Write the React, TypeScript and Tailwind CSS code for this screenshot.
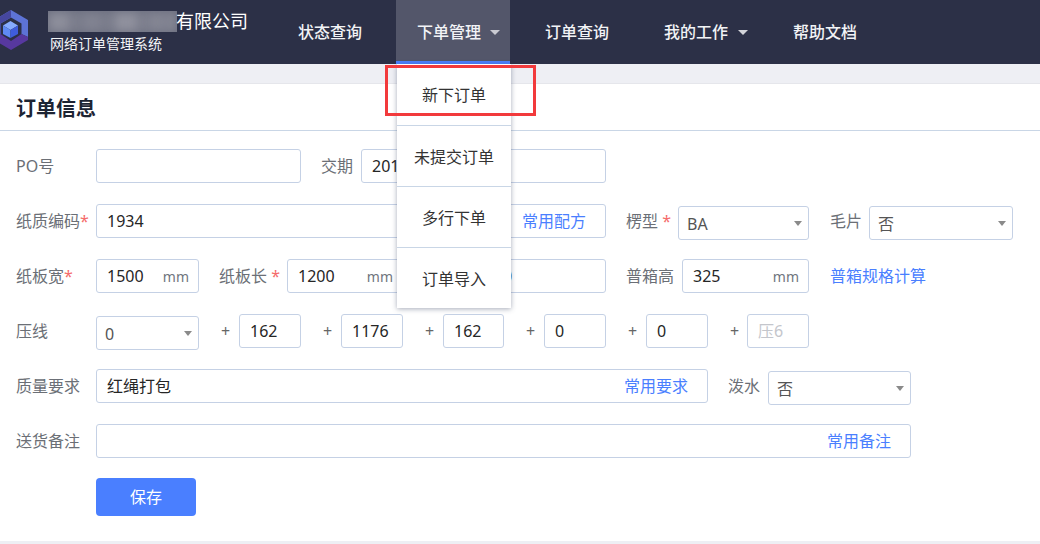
const fontStack = { fontFamily: '"Noto Sans", "Noto Sans CJK SC", sans-serif' };

const blurBlobs = [
  { w: 22, o: 0.6 },
  { w: 12, o: 0.3 },
  { w: 20, o: 0.4 },
  { w: 12, o: 0.3 },
  { w: 24, o: 0.65 },
  { w: 10, o: 0.35 },
  { w: 17, o: 0.45 },
  { w: 12, o: 0.45 },
];

function Caret({ className }: { className: string }) {
  return <span className={`inline-block h-0 w-0 border-x-[5px] border-t-[5px] border-x-transparent ${className}`}></span>;
}

function Label({ className, text, star }: { className: string; text?: string; star?: string }) {
  return (
    <div className={`h-[34px] shrink-0 whitespace-nowrap leading-[34px] text-[#6b6f76] ${className}`}>
      {text}
      {star && <span className="text-[#f56c6c]">{star}</span>}
    </div>
  );
}

function Input({ className, value, unit, link }: { className: string; value?: string; unit?: string; link?: string }) {
  return (
    <div className={`flex h-[34px] shrink-0 items-center justify-between rounded-[3px] border border-[#c5d1e5] bg-white pl-[10px] ${link ? 'pr-[19px]' : 'pr-[9px]'} ${className}`}>
      <span className="whitespace-nowrap text-[#262626]">{value}</span>
      {unit && <span className="text-[14px] text-[#70757e]">{unit}</span>}
      {link && <span className="whitespace-nowrap text-[#4a7fff]">{link}</span>}
    </div>
  );
}

function Select({ className, value }: { className: string; value: string }) {
  return (
    <div className={`mt-[2px] flex h-[34px] shrink-0 items-center justify-between rounded-[3px] border border-[#c5d1e5] bg-white pl-[8px] pr-[6px] ${className}`}>
      <span className="pt-[2px] text-[#555]">{value}</span>
      <span className="inline-block h-0 w-0 border-x-[4px] border-t-[5px] border-x-transparent border-t-[#8a8a8a]"></span>
    </div>
  );
}

function Plus() {
  return <div className="h-[34px] w-[40px] shrink-0 pl-[22px] text-[16px] leading-[34px] text-[#666]">+</div>;
}

function Row({ children }: { children: React.ReactNode }) {
  return <div className="mb-[21px] flex h-[34px] items-start">{children}</div>;
}

const navBase = 'flex h-[64px] shrink-0 items-center text-[16px] font-medium text-[#f2f3f6]';

export default function App() {
  return (
    <div className="relative h-[544px] w-[1040px] overflow-hidden bg-[#eeeff4] text-[16px]" style={fontStack}>
      <header className="flex h-[64px] bg-[#2c3047]">
        {/* logo is cut off by the left edge of the page */}
        <svg className="ml-[-6px] mt-[10px] h-[40px] w-[34px] shrink-0" viewBox="0 0 34 40">
          <path d="M17 0 34 10 34 27 27.5 24 27.5 13.5 17 7.5 6.5 13.5 6.5 24 0 27 0 10Z" fill="#5d73d6" />
          <path d="M17 0 17 7.5 6.5 13.5 6.5 24 0 27 0 10Z" fill="#46479f" />
          <path d="M0 27 6.5 24 17 31 27.5 24 34 27 34 30 17 40 0 30Z" fill="#57389f" />
          <path d="M16.5 11 24 15.5 16.5 20 9 15.5Z" fill="#86abff" />
          <path d="M9 15.5 16.5 20 16.5 28 9 24Z" fill="#5f8af5" />
          <path d="M24 15.5 16.5 20 16.5 28 24 24Z" fill="#3f5cdc" />
        </svg>
        <div className="ml-[20px] w-[250px] shrink-0">
          <div className="mt-[11px] flex h-[21px] items-center">
            <div className="flex h-[21px] w-[129px] items-center overflow-hidden bg-[#6a6d7e]">
              {blurBlobs.map((blob, i) => (
                <span
                  key={i}
                  className="h-[20px] shrink-0 bg-[#a4a4ae] blur-[5px]"
                  style={{ width: blob.w, opacity: blob.o }}
                ></span>
              ))}
            </div>
            <span className="ml-[-1px] whitespace-nowrap text-[18px] leading-[21px] text-white">有限公司</span>
          </div>
          <div className="ml-[2px] mt-[2px] whitespace-nowrap text-[14px] leading-[20px] text-[#f4f5f8]">网络订单管理系统</div>
        </div>
        <div className={navBase}>状态查询</div>
        <div className={`${navBase} relative ml-[34px] w-[114px] justify-start border-b-[3px] border-[#4a7fff] bg-[#53566a] pl-[21px] pt-[3px]`}>
          下单管理
          <Caret className="ml-[9px] mt-[1px] border-t-[#c9cad2]" />
        </div>
        <div className={`${navBase} ml-[35px]`}>订单查询</div>
        <div className={`${navBase} ml-[55px]`}>
          我的工作
          <Caret className="ml-[10px] mt-[1px] border-t-[#d3d4da]" />
        </div>
        <div className={`${navBase} ml-[45px]`}>帮助文档</div>
      </header>

      <div className="h-[20px] border-b border-[#e5e6eb]"></div>

      <main className="h-[457px] bg-white">
        <div className="h-[47px] border-b border-[#c9d6e6] pl-[16px] text-[20px] font-bold leading-[50px] text-[#1d2433]">订单信息</div>
        <div className="pl-[16px] pt-[18px]">
          <Row>
            <Label className="w-[80px]" text="PO号" />
            <Input className="w-[205px]" />
            <Label className="ml-[20px] w-[40px]" text="交期" />
            <Input className="w-[245px]" value="2019" />
          </Row>
          <Row>
            <Label className="w-[80px]" text="纸质编码" star="*" />
            <Input className="w-[510px]" value="1934" link="常用配方" />
            <Label className="ml-[20px] w-[52px]" text="楞型 " star="*" />
            <Select className="w-[131px]" value="BA" />
            <Label className="ml-[21px] w-[39px]" text="毛片" />
            <Select className="w-[144px]" value="否" />
          </Row>
          <Row>
            <Label className="w-[80px]" text="纸板宽" star="*" />
            <Input className="w-[103px]" value="1500" unit="mm" />
            <Label className="ml-[20px] w-[68px]" text="纸板长 " star="*" />
            <Input className="w-[116px]" value="1200" unit="mm" />
            {/* this label sits behind the open menu */}
            <Label className="ml-[21px] w-[68px]" />
            <Input className="w-[114px]" value="0" />
            <Label className="ml-[20px] w-[56px]" text="普箱高" />
            <Input className="w-[127px]" value="325" unit="mm" />
            <div className="ml-[21px] whitespace-nowrap leading-[34px] text-[#4a7fff]">普箱规格计算</div>
          </Row>
          <Row>
            <Label className="w-[80px]" text="压线" />
            <Select className="w-[103px]" value="0" />
            <Plus />
            <Input className="w-[62px]" value="162" />
            <Plus />
            <Input className="w-[62px]" value="1176" />
            <Plus />
            <Input className="w-[61px]" value="162" />
            <Plus />
            <Input className="w-[62px]" value="0" />
            <Plus />
            <Input className="w-[62px]" value="0" />
            <Plus />
            <div className="ml-[-1px] flex h-[34px] w-[62px] shrink-0 items-center rounded-[3px] border border-[#c5d1e5] bg-white pl-[10px] text-[#c4c6cc]">压6</div>
          </Row>
          <Row>
            <Label className="w-[80px]" text="质量要求" />
            <Input className="w-[612px]" value="红绳打包" link="常用要求" />
            <Label className="ml-[20px] w-[40px]" text="泼水" />
            <Select className="w-[143px]" value="否" />
          </Row>
          <Row>
            <Label className="w-[80px]" text="送货备注" />
            <Input className="w-[815px]" link="常用备注" />
          </Row>
          <button className="ml-[80px] mt-[-1px] h-[38px] w-[100px] rounded-[4px] bg-[#4a7fff] text-[16px] text-white">保存</button>
        </div>
      </main>

      <div className="absolute left-[397px] top-[64px] w-[114px] bg-white text-center text-[16px] text-[#333] shadow-[0_1px_5px_rgba(60,70,100,0.45)]">
        <div className="h-[62px] border-b border-[#c9d6e6] pt-[10px] leading-[43px]">新下订单</div>
        <div className="h-[61px] border-b border-[#c9d6e6] leading-[62px]">未提交订单</div>
        <div className="h-[61px] border-b border-[#c9d6e6] leading-[62px]">多行下单</div>
        <div className="h-[60px] leading-[62px]">订单导入</div>
      </div>

      <div className="absolute left-[385px] top-[65px] h-[51px] w-[151px] border-[3px] border-[#f23a3c]"></div>
    </div>
  );
}
